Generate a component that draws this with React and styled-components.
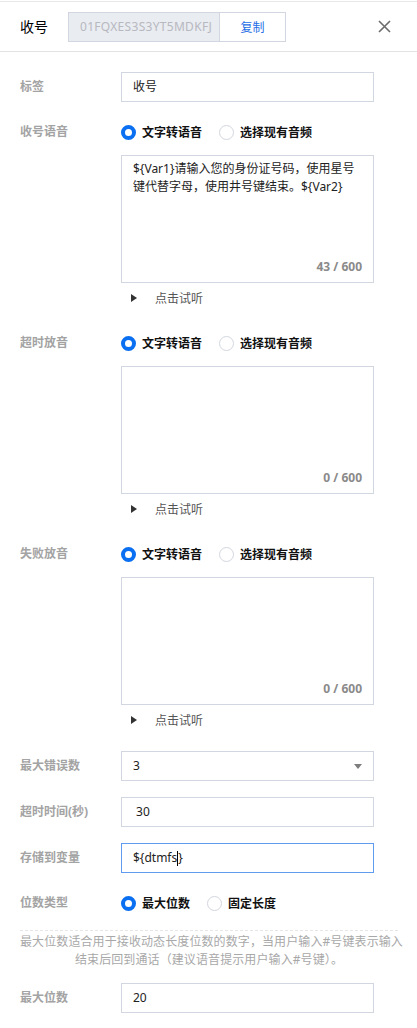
import React from "react";
import styled, { createGlobalStyle } from "styled-components";

const GlobalStyle = createGlobalStyle`
  html, body { margin: 0; padding: 0; background: #fff; }
  body {
    font-family: "Noto Sans", "Noto Sans CJK SC", sans-serif;
    font-size: 12px;
    color: #333;
  }
  * { box-sizing: border-box; }
`;

const Page = styled.div`
  width: 417px;
  padding-top: 1px;
  background: #fff;
`;

const Header = styled.header`
  display: flex;
  align-items: center;
  height: 51px;
  padding: 0 26px 0 20px;
  border-top: 1px solid #e8e8e8;
  border-bottom: 1px solid #e3e3e3;
`;

const Title = styled.h2`
  margin: 0;
  width: 48px;
  font-size: 14px;
  font-weight: 400;
  color: #000;
  line-height: 20px;
`;

const IdGroup = styled.div`
  display: flex;
  height: 30px;
  border: 1px solid #d1d6e0;
`;

const IdField = styled.div`
  width: 151px;
  padding: 0 6px 0 11px;
  background: #e9ecf1;
  color: #b8b8bf;
  line-height: 28px;
  letter-spacing: 0.3px;
  white-space: nowrap;
  overflow: hidden;
  border-right: 1px solid #d1d6e0;
`;

const CopyButton = styled.button`
  width: 65px;
  border: none;
  background: #fff;
  color: #1f6fe5;
  font: inherit;
  font-size: 12px;
  padding: 0;
  cursor: pointer;
`;

const CloseButton = styled.button`
  margin-left: auto;
  width: 14px;
  height: 14px;
  padding: 0;
  border: none;
  background: none;
  display: flex;
  align-items: center;
  justify-content: center;
`;

const Form = styled.div`
  padding: 20px 20px 40px;
`;

const Row = styled.div`
  display: grid;
  grid-template-columns: 101px 253px;
  align-items: start;
  margin-top: ${(p) => p.$mt || 0}px;
`;

const Label = styled.div`
  height: 30px;
  line-height: 30px;
  color: #a3a3a3;
  font-weight: 700;
  white-space: nowrap;
`;

const Column = styled.div`
  display: flex;
  flex-direction: column;
`;

const TextInput = styled.div`
  height: 30px;
  padding: 0 11px;
  border: 1px solid ${(p) => (p.$focus ? "#5f9cef" : "#d1d6e0")};
  line-height: 28px;
  color: #222;
  display: flex;
  align-items: center;
`;

const Caret = styled.span`
  display: inline-block;
  width: 1px;
  height: 15px;
  background: #000;
`;

const SelectBox = styled(TextInput)`
  justify-content: space-between;
  padding-right: 11px;
`;

const Arrow = styled.span`
  width: 0;
  height: 0;
  border-left: 4px solid transparent;
  border-right: 4px solid transparent;
  border-top: 5px solid #7d7d7d;
`;

const RadioGroup = styled.div`
  display: flex;
  align-items: center;
  height: 30px;
`;

const RadioOption = styled.label`
  display: flex;
  align-items: center;
  margin-right: 17px;
  color: #111;
  font-weight: 700;
  cursor: pointer;
`;

const RadioCircle = styled.span`
  width: 15px;
  height: 15px;
  border-radius: 50%;
  margin-right: 6px;
  background: #fff;
  border: ${(p) => (p.$checked ? "4px solid #0a6ff0" : "1px solid #d2d6de")};
`;

const TextAreaBox = styled.div`
  position: relative;
  margin-top: 8px;
  height: 128px;
  border: 1px solid #d1d6e0;
`;

const TextArea = styled.textarea`
  display: block;
  width: 100%;
  height: 100%;
  border: none;
  resize: none;
  outline: none;
  padding: 4px 11px;
  font: inherit;
  font-size: 12px;
  line-height: 18px;
  color: #222;
  background: transparent;
  overflow: hidden;
`;

const Counter = styled.span`
  position: absolute;
  right: 11px;
  bottom: 8px;
  color: #8a8a8a;
  font-weight: 700;
  line-height: 14px;
`;

const PlayRow = styled.div`
  display: flex;
  align-items: center;
  height: 20px;
  margin-top: 5px;
  padding-left: 10px;
  color: #555;
  cursor: pointer;
`;

const PlayIcon = styled.span`
  width: 0;
  height: 0;
  border-top: 4px solid transparent;
  border-bottom: 4px solid transparent;
  border-left: 6px solid #333;
  margin-right: 18px;
`;

const Help = styled.p`
  margin: 12px -1px 0 0;
  padding-top: 2px;
  border-top: 1px dashed #e6e6e6;
  color: #a8a8a8;
  text-align: center;
  line-height: 18px;
  font-size: 12px;
  white-space: nowrap;
  letter-spacing: 0.1px;
`;

function Radios({ options, value }) {
  return (
    <RadioGroup>
      {options.map((o) => (
        <RadioOption key={o}>
          <RadioCircle $checked={o === value} />
          {o}
        </RadioOption>
      ))}
    </RadioGroup>
  );
}

function VoiceField({ label, text, mt }) {
  return (
    <Row $mt={mt}>
      <Label>{label}</Label>
      <Column>
        <Radios options={["文字转语音", "选择现有音频"]} value="文字转语音" />
        <TextAreaBox>
          <TextArea readOnly value={text} />
          <Counter>{text.length} / 600</Counter>
        </TextAreaBox>
        <PlayRow>
          <PlayIcon />
          点击试听
        </PlayRow>
      </Column>
    </Row>
  );
}

export default function App() {
  const prompt =
    "${Var1}请输入您的身份证号码，使用星号键代替字母，使用井号键结束。${Var2}";
  return (
    <Page>
      <GlobalStyle />
      <Header>
        <Title>收号</Title>
        <IdGroup>
          <IdField>01FQXES3S3YT5MDKFJ</IdField>
          <CopyButton>复制</CopyButton>
        </IdGroup>
        <CloseButton aria-label="关闭">
          <svg width="13" height="13" viewBox="0 0 13 13">
            <path d="M1 1L12 12M12 1L1 12" stroke="#6b6b6b" strokeWidth="1.6" fill="none" />
          </svg>
        </CloseButton>
      </Header>
      <Form>
        <Row>
          <Label>标签</Label>
          <TextInput>收号</TextInput>
        </Row>
        <VoiceField label="收号语音" text={prompt} mt={15} />
        <VoiceField label="超时放音" text="" mt={20} />
        <VoiceField label="失败放音" text="" mt={20} />
        <Row $mt={21}>
          <Label>最大错误数</Label>
          <SelectBox>
            3
            <Arrow />
          </SelectBox>
        </Row>
        <Row $mt={16}>
          <Label>超时时间(秒)</Label>
          <TextInput>&nbsp;30</TextInput>
        </Row>
        <Row $mt={16}>
          <Label>存储到变量</Label>
          <TextInput $focus>
            {"${dtmfs"}
            <Caret />
            {"}"}
          </TextInput>
        </Row>
        <Row $mt={15}>
          <Label>位数类型</Label>
          <Radios options={["最大位数", "固定长度"]} value="最大位数" />
        </Row>
        <Help>
          最大位数适合用于接收动态长度位数的数字，当用户输入#号键表示输入
          <br />
          结束后回到通话（建议语音提示用户输入#号键）。
        </Help>
        <Row $mt={14}>
          <Label>最大位数</Label>
          <TextInput>20</TextInput>
        </Row>
      </Form>
    </Page>
  );
}
